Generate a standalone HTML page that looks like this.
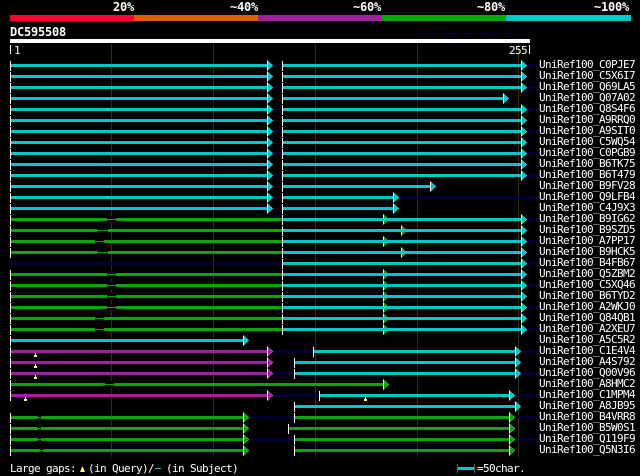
<!DOCTYPE html>
<html><head><meta charset="utf-8"><style>
html,body{margin:0;padding:0;background:#000;width:640px;height:476px;overflow:hidden}
#w{position:absolute;left:0;top:0;width:640px;height:476px;background:#000;overflow:hidden}
svg{position:absolute;left:0;top:0}
text{font-family:"DejaVu Sans Mono","Liberation Mono",monospace;font-size:11px;letter-spacing:-.62px;fill:#fff}
.bt{font-weight:bold;font-size:12px;letter-spacing:-.22px}
.h{position:absolute;left:0;width:640px;height:3px}
.h i{position:absolute;top:0;height:3px;display:block}
.h s{position:absolute;top:1px;height:1px;display:block;background:#00a800}
.h q{position:absolute;top:-2px;height:7px;display:block;background:#000;quotes:none}
.h b{position:absolute;top:-3px;width:1px;height:10px;display:block;background:#fff}
.h u{position:absolute;top:-4px;width:6px;height:11px;display:block;background:#fff;clip-path:polygon(0 0,100% 50%,0 100%)}
.h u::after{content:"";position:absolute;left:1px;top:1px;width:4.5px;height:9px;clip-path:polygon(0 0,100% 50%,0 100%)}
.h u.c,.h u.g,.h u.p{background:#fff}
.h u.c::after{background:#00c8c8}.h u.g::after{background:#00a800}.h u.p::after{background:#a020a0}
.h i.c{background:#00c8c8}.h i.g{background:#00a800}.h i.p{background:#a020a0}.h i.d{background:#000033}
.h em{position:absolute;left:0;top:3px;width:3px;height:4px;display:block}
.h em::before{content:"";position:absolute;left:1px;top:0;width:1px;height:2px;background:#ffff66}
.h em::after{content:"";position:absolute;left:0;top:2px;width:3px;height:2px;background:#ffff66}
.r{position:absolute;display:block}
</style></head><body><div id="w">
<div class="r" style="left:10px;top:15px;width:124px;height:6px;background:#ff0033"></div>
<div class="r" style="left:134px;top:15px;width:124px;height:6px;background:#e06000"></div>
<div class="r" style="left:258px;top:15px;width:124px;height:6px;background:#a020a0"></div>
<div class="r" style="left:382px;top:15px;width:124px;height:6px;background:#00a800"></div>
<div class="r" style="left:506px;top:15px;width:125px;height:6px;background:#00c8c8"></div>
<div class="r" style="left:10px;top:39px;width:520px;height:4px;background:#fff"></div>
<div class="r" style="left:10px;top:45px;width:1px;height:9px;background:#fff"></div>
<div class="r" style="left:529px;top:45px;width:1px;height:9px;background:#fff"></div>
<div class="r" style="left:111px;top:44px;width:1px;height:413px;background:#333300"></div>
<div class="r" style="left:213px;top:44px;width:1px;height:413px;background:#333300"></div>
<div class="r" style="left:315px;top:44px;width:1px;height:413px;background:#333300"></div>
<div class="r" style="left:417px;top:44px;width:1px;height:413px;background:#333300"></div>
<div class="r" style="left:518px;top:44px;width:1px;height:413px;background:#333300"></div>

<div class="h" style="top:64px"><i class="d" style="left:273px;width:9px"></i><i class="d" style="left:527px;width:11px"></i><b style="left:10px"></b><i class="c" style="left:11px;width:256px"></i><u class="c" style="left:267px"></u><b style="left:282px"></b><i class="c" style="left:283px;width:238px"></i><u class="c" style="left:521px"></u></div>
<div class="h" style="top:75px"><b style="left:10px"></b><i class="c" style="left:11px;width:256px"></i><u class="c" style="left:267px"></u><b style="left:282px"></b><i class="c" style="left:283px;width:238px"></i><u class="c" style="left:521px"></u></div>
<div class="h" style="top:86px"><i class="d" style="left:273px;width:9px"></i><i class="d" style="left:527px;width:11px"></i><b style="left:10px"></b><i class="c" style="left:11px;width:256px"></i><u class="c" style="left:267px"></u><b style="left:282px"></b><i class="c" style="left:283px;width:238px"></i><u class="c" style="left:521px"></u></div>
<div class="h" style="top:97px"><b style="left:10px"></b><i class="c" style="left:11px;width:256px"></i><u class="c" style="left:267px"></u><b style="left:282px"></b><i class="c" style="left:283px;width:220px"></i><u class="c" style="left:503px"></u></div>
<div class="h" style="top:108px"><i class="d" style="left:273px;width:9px"></i><i class="d" style="left:527px;width:11px"></i><b style="left:10px"></b><i class="c" style="left:11px;width:256px"></i><u class="c" style="left:267px"></u><b style="left:282px"></b><i class="c" style="left:283px;width:238px"></i><u class="c" style="left:521px"></u></div>
<div class="h" style="top:119px"><b style="left:10px"></b><i class="c" style="left:11px;width:256px"></i><u class="c" style="left:267px"></u><b style="left:282px"></b><i class="c" style="left:283px;width:238px"></i><u class="c" style="left:521px"></u></div>
<div class="h" style="top:130px"><i class="d" style="left:273px;width:9px"></i><i class="d" style="left:527px;width:11px"></i><b style="left:10px"></b><i class="c" style="left:11px;width:256px"></i><u class="c" style="left:267px"></u><b style="left:282px"></b><i class="c" style="left:283px;width:238px"></i><u class="c" style="left:521px"></u></div>
<div class="h" style="top:141px"><b style="left:10px"></b><i class="c" style="left:11px;width:256px"></i><u class="c" style="left:267px"></u><b style="left:282px"></b><i class="c" style="left:283px;width:238px"></i><u class="c" style="left:521px"></u></div>
<div class="h" style="top:152px"><i class="d" style="left:273px;width:9px"></i><i class="d" style="left:527px;width:11px"></i><b style="left:10px"></b><i class="c" style="left:11px;width:256px"></i><u class="c" style="left:267px"></u><b style="left:282px"></b><i class="c" style="left:283px;width:238px"></i><u class="c" style="left:521px"></u></div>
<div class="h" style="top:163px"><b style="left:10px"></b><i class="c" style="left:11px;width:256px"></i><u class="c" style="left:267px"></u><b style="left:282px"></b><i class="c" style="left:283px;width:238px"></i><u class="c" style="left:521px"></u></div>
<div class="h" style="top:174px"><i class="d" style="left:273px;width:9px"></i><i class="d" style="left:527px;width:11px"></i><b style="left:10px"></b><i class="c" style="left:11px;width:256px"></i><u class="c" style="left:267px"></u><b style="left:282px"></b><i class="c" style="left:283px;width:238px"></i><u class="c" style="left:521px"></u></div>
<div class="h" style="top:185px"><b style="left:10px"></b><i class="c" style="left:11px;width:256px"></i><u class="c" style="left:267px"></u><b style="left:282px"></b><i class="c" style="left:283px;width:147px"></i><u class="c" style="left:430px"></u></div>
<div class="h" style="top:196px"><i class="d" style="left:273px;width:9px"></i><i class="d" style="left:399px;width:139px"></i><b style="left:10px"></b><i class="c" style="left:11px;width:256px"></i><u class="c" style="left:267px"></u><b style="left:282px"></b><i class="c" style="left:283px;width:110px"></i><u class="c" style="left:393px"></u></div>
<div class="h" style="top:207px"><b style="left:10px"></b><i class="c" style="left:11px;width:256px"></i><u class="c" style="left:267px"></u><b style="left:282px"></b><i class="c" style="left:283px;width:110px"></i><u class="c" style="left:393px"></u></div>

<div class="h" style="top:218px"><i class="d" style="left:527px;width:11px"></i><b style="left:10px"></b><i class="g" style="left:11px;width:96px"></i><q style="left:107px;width:9px"></q><s style="left:107px;width:9px"></s><i class="g" style="left:116px;width:166px"></i><u class="g" style="left:383px"></u><b style="left:282px"></b><i class="c" style="left:283px;width:238px"></i><u class="c" style="left:521px"></u></div>
<div class="h" style="top:229px"><b style="left:10px"></b><i class="g" style="left:11px;width:86px"></i><s style="left:97px;width:11px"></s><i class="g" style="left:108px;width:174px"></i><u class="g" style="left:401px"></u><b style="left:282px"></b><i class="c" style="left:283px;width:238px"></i><u class="c" style="left:521px"></u></div>
<div class="h" style="top:240px"><i class="d" style="left:527px;width:11px"></i><b style="left:10px"></b><i class="g" style="left:11px;width:84px"></i><s style="left:95px;width:9px"></s><i class="g" style="left:104px;width:178px"></i><u class="g" style="left:383px"></u><b style="left:282px"></b><i class="c" style="left:283px;width:238px"></i><u class="c" style="left:521px"></u></div>
<div class="h" style="top:251px"><b style="left:10px"></b><i class="g" style="left:11px;width:86px"></i><s style="left:97px;width:11px"></s><i class="g" style="left:108px;width:174px"></i><u class="g" style="left:401px"></u><b style="left:282px"></b><i class="c" style="left:283px;width:238px"></i><u class="c" style="left:521px"></u></div>
<div class="h" style="top:262px"><i class="d" style="left:10px;width:272px"></i><i class="d" style="left:527px;width:11px"></i><b style="left:282px"></b><i class="c" style="left:283px;width:238px"></i><u class="c" style="left:521px"></u></div>
<div class="h" style="top:273px"><b style="left:10px"></b><i class="g" style="left:11px;width:96px"></i><q style="left:107px;width:9px"></q><s style="left:107px;width:9px"></s><i class="g" style="left:116px;width:166px"></i><u class="g" style="left:383px"></u><b style="left:282px"></b><i class="c" style="left:283px;width:238px"></i><u class="c" style="left:521px"></u></div>
<div class="h" style="top:284px"><i class="d" style="left:527px;width:11px"></i><b style="left:10px"></b><i class="g" style="left:11px;width:96px"></i><q style="left:107px;width:9px"></q><s style="left:107px;width:9px"></s><i class="g" style="left:116px;width:166px"></i><u class="g" style="left:383px"></u><b style="left:282px"></b><i class="c" style="left:283px;width:238px"></i><u class="c" style="left:521px"></u></div>
<div class="h" style="top:295px"><b style="left:10px"></b><i class="g" style="left:11px;width:96px"></i><q style="left:107px;width:9px"></q><s style="left:107px;width:9px"></s><i class="g" style="left:116px;width:166px"></i><u class="g" style="left:383px"></u><b style="left:282px"></b><i class="c" style="left:283px;width:238px"></i><u class="c" style="left:521px"></u></div>
<div class="h" style="top:306px"><i class="d" style="left:527px;width:11px"></i><b style="left:10px"></b><i class="g" style="left:11px;width:96px"></i><q style="left:107px;width:9px"></q><s style="left:107px;width:9px"></s><i class="g" style="left:116px;width:166px"></i><u class="g" style="left:383px"></u><b style="left:282px"></b><i class="c" style="left:283px;width:238px"></i><u class="c" style="left:521px"></u></div>
<div class="h" style="top:317px"><b style="left:10px"></b><i class="g" style="left:11px;width:84px"></i><s style="left:95px;width:9px"></s><i class="g" style="left:104px;width:178px"></i><u class="g" style="left:383px"></u><b style="left:282px"></b><i class="c" style="left:283px;width:238px"></i><u class="c" style="left:521px"></u></div>
<div class="h" style="top:328px"><i class="d" style="left:527px;width:11px"></i><b style="left:10px"></b><i class="g" style="left:11px;width:84px"></i><s style="left:95px;width:9px"></s><i class="g" style="left:104px;width:178px"></i><u class="g" style="left:383px"></u><b style="left:282px"></b><i class="c" style="left:283px;width:238px"></i><u class="c" style="left:521px"></u></div>

<div class="h" style="top:339px"><b style="left:10px"></b><i class="c" style="left:11px;width:232px"></i><u class="c" style="left:243px"></u></div>
<div class="h" style="top:350px"><i class="d" style="left:273px;width:40px"></i><i class="d" style="left:521px;width:17px"></i><b style="left:10px"></b><i class="p" style="left:11px;width:256px"></i><u class="p" style="left:267px"></u><em style="left:34px"></em><b style="left:313px"></b><i class="c" style="left:314px;width:201px"></i><u class="c" style="left:515px"></u></div>
<div class="h" style="top:361px"><b style="left:10px"></b><i class="p" style="left:11px;width:256px"></i><u class="p" style="left:267px"></u><em style="left:34px"></em><b style="left:294px"></b><i class="c" style="left:295px;width:220px"></i><u class="c" style="left:515px"></u></div>
<div class="h" style="top:372px"><i class="d" style="left:273px;width:21px"></i><i class="d" style="left:521px;width:17px"></i><b style="left:10px"></b><i class="p" style="left:11px;width:256px"></i><u class="p" style="left:267px"></u><em style="left:34px"></em><b style="left:294px"></b><i class="c" style="left:295px;width:220px"></i><u class="c" style="left:515px"></u></div>
<div class="h" style="top:383px"><b style="left:10px"></b><i class="g" style="left:11px;width:94px"></i><q style="left:105px;width:9px"></q><s style="left:105px;width:9px"></s><i class="g" style="left:114px;width:269px"></i><u class="g" style="left:383px"></u></div>
<div class="h" style="top:394px"><i class="d" style="left:273px;width:46px"></i><i class="d" style="left:515px;width:23px"></i><b style="left:10px"></b><i class="p" style="left:11px;width:256px"></i><u class="p" style="left:267px"></u><em style="left:24px"></em><b style="left:319px"></b><i class="c" style="left:320px;width:189px"></i><u class="c" style="left:509px"></u><em style="left:364px"></em></div>
<div class="h" style="top:405px"><b style="left:294px"></b><i class="c" style="left:295px;width:220px"></i><u class="c" style="left:515px"></u></div>
<div class="h" style="top:416px"><i class="d" style="left:249px;width:45px"></i><i class="d" style="left:515px;width:23px"></i><b style="left:10px"></b><i class="g" style="left:11px;width:27px"></i><s style="left:38px;width:3px"></s><i class="g" style="left:41px;width:202px"></i><u class="g" style="left:243px"></u><b style="left:294px"></b><i class="g" style="left:295px;width:214px"></i><u class="g" style="left:509px"></u></div>
<div class="h" style="top:427px"><b style="left:10px"></b><i class="g" style="left:11px;width:27px"></i><s style="left:38px;width:3px"></s><i class="g" style="left:41px;width:202px"></i><u class="g" style="left:243px"></u><b style="left:288px"></b><i class="g" style="left:289px;width:220px"></i><u class="g" style="left:509px"></u></div>
<div class="h" style="top:438px"><i class="d" style="left:249px;width:45px"></i><i class="d" style="left:515px;width:23px"></i><b style="left:10px"></b><i class="g" style="left:11px;width:27px"></i><s style="left:38px;width:3px"></s><i class="g" style="left:41px;width:202px"></i><u class="g" style="left:243px"></u><b style="left:294px"></b><i class="g" style="left:295px;width:214px"></i><u class="g" style="left:509px"></u></div>
<div class="h" style="top:449px"><b style="left:10px"></b><i class="g" style="left:11px;width:29px"></i><s style="left:40px;width:3px"></s><i class="g" style="left:43px;width:200px"></i><u class="g" style="left:243px"></u><b style="left:294px"></b><i class="g" style="left:295px;width:214px"></i><u class="g" style="left:509px"></u></div>

<div class="r" style="left:155px;top:468px;width:6px;height:1px;background:#00c8c8"></div>
<div class="r" style="left:457px;top:464px;width:1px;height:9px;background:#666633"></div>
<div class="r" style="left:474px;top:464px;width:1px;height:9px;background:#666633"></div>
<div class="r" style="left:458px;top:467px;width:16px;height:3px;background:#00c8c8"></div>
<div class="r" style="left:80px;top:466px;width:5px;height:6px;background:#ffff66;clip-path:polygon(50% 0,100% 100%,0 100%)"></div>

<svg width="640" height="476" viewBox="0 0 640 476" xmlns="http://www.w3.org/2000/svg">
<text class="bt" x="113" y="11">20%</text>
<text class="bt" x="230" y="11">~40%</text>
<text class="bt" x="353" y="11">~60%</text>
<text class="bt" x="477" y="11">~80%</text>
<text class="bt" x="594" y="11">~100%</text>
<text class="bt" x="10" y="36">DC595508</text>
<text x="414" y="37" textLength="114" lengthAdjust="spacingAndGlyphs" style="fill:#000033;font-size:8.3px;letter-spacing:0">AlignView.pm Beta rel.7</text>
<text x="14" y="54">1</text>
<text x="509" y="54">255</text>
<text x="539" y="68">UniRef100_C0PJE7</text>
<text x="539" y="79">UniRef100_C5X6I7</text>
<text x="539" y="90">UniRef100_Q69LA5</text>
<text x="539" y="101">UniRef100_Q07A02</text>
<text x="539" y="112">UniRef100_Q8S4F6</text>
<text x="539" y="123">UniRef100_A9RRQ0</text>
<text x="539" y="134">UniRef100_A9SIT0</text>
<text x="539" y="145">UniRef100_C5WQ54</text>
<text x="539" y="156">UniRef100_C0PGB9</text>
<text x="539" y="167">UniRef100_B6TK75</text>
<text x="539" y="178">UniRef100_B6T479</text>
<text x="539" y="189">UniRef100_B9FV28</text>
<text x="539" y="200">UniRef100_Q9LFB4</text>
<text x="539" y="211">UniRef100_C4J9X3</text>
<text x="539" y="222">UniRef100_B9IG62</text>
<text x="539" y="233">UniRef100_B9SZD5</text>
<text x="539" y="244">UniRef100_A7PP17</text>
<text x="539" y="255">UniRef100_B9HCK5</text>
<text x="539" y="266">UniRef100_B4FB67</text>
<text x="539" y="277">UniRef100_Q5ZBM2</text>
<text x="539" y="288">UniRef100_C5XQ46</text>
<text x="539" y="299">UniRef100_B6TYD2</text>
<text x="539" y="310">UniRef100_A2WKJ0</text>
<text x="539" y="321">UniRef100_Q84QB1</text>
<text x="539" y="332">UniRef100_A2XEU7</text>
<text x="539" y="343">UniRef100_A5C5R2</text>
<text x="539" y="354">UniRef100_C1E4V4</text>
<text x="539" y="365">UniRef100_A4S792</text>
<text x="539" y="376">UniRef100_Q00V96</text>
<text x="539" y="387">UniRef100_A8HMC2</text>
<text x="539" y="398">UniRef100_C1MPM4</text>
<text x="539" y="409">UniRef100_A8JB95</text>
<text x="539" y="420">UniRef100_B4VRR8</text>
<text x="539" y="431">UniRef100_B5W0S1</text>
<text x="539" y="442">UniRef100_Q119F9</text>
<text x="539" y="453">UniRef100_Q5N3I6</text>
<text x="10" y="472">Large gaps:</text>
<text x="88" y="472">(in Query)/</text>
<text x="166" y="472">(in Subject)</text>
<text x="477" y="472">=50char.</text>
</svg>
</div></body></html>
